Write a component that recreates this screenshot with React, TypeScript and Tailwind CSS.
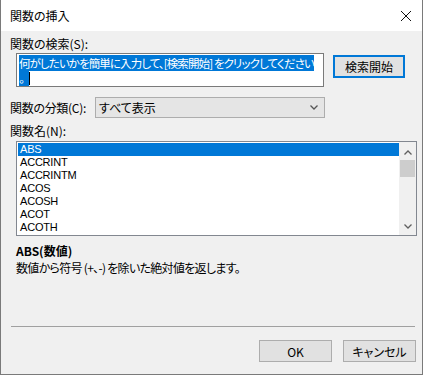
const functions = ["ABS", "ACCRINT", "ACCRINTM", "ACOS", "ACOSH", "ACOT", "ACOTH"];

function CloseIcon() {
  return (
    <svg width="12" height="12" viewBox="0 0 12 12" className="block">
      <path d="M1 1 L11 11 M11 1 L1 11" stroke="#111" strokeWidth="1" fill="none" />
    </svg>
  );
}

function Chevron({ up = false, color = "#606060" }: { up?: boolean; color?: string }) {
  return (
    <svg width="8" height="5" viewBox="0 0 8 5" className="block">
      <path
        d={up ? "M0.5 4.5 L4 1 L7.5 4.5" : "M0.5 0.5 L4 4 L7.5 0.5"}
        stroke={color}
        strokeWidth="1.3"
        fill="none"
      />
    </svg>
  );
}

function Button({ children }: { children: React.ReactNode }) {
  return (
    <div className="flex h-[22px] w-[73px] items-center justify-center border border-[#adadad] bg-[#e1e1e1] text-[12px] leading-[15px] text-black">
      {children}
    </div>
  );
}

export default function App() {
  return (
    <div className="flex h-[375px] w-[423px] flex-col border-x border-b border-[#7a7a7a] bg-[#f0f0f0] font-['Noto_Sans_CJK_JP',sans-serif] text-black [font-feature-settings:'palt']">
      <div className="flex h-[31px] shrink-0 items-center justify-between bg-white pl-[9px] pr-[10px]">
        <span className="text-[12px] leading-[15px]">関数の挿入</span>
        <CloseIcon />
      </div>

      <div className="flex flex-1 flex-col pl-[9px] pr-[6px] pt-[5px]">
        <div className="text-[12px] leading-[15px]">関数の検索(S):</div>

        <div className="mt-[2px] flex items-start">
          <div className="ml-[6px] h-[34px] w-[308px] overflow-hidden border border-[#7a7a7a] bg-white px-[2px] pt-[2px] text-[11.5px] leading-[15px]">
            <div className="whitespace-nowrap tracking-[-0.9px]">
              <span className="bg-[#0078d7] text-white">何がしたいかを簡単に入力して、[検索開始] をクリックしてください</span>
            </div>
            <div className="flex items-center">
              <span className="bg-[#0078d7] pr-[4px] text-white">。</span>
              <span className="h-[13px] w-px bg-black" />
            </div>
          </div>
          <div className="ml-[9px] mt-[2px]">
            <div className="flex h-[23px] w-[72px] items-center justify-center border-2 border-[#0078d7] bg-[#e1e1e1] text-[12px] leading-[15px]">
              検索開始
            </div>
          </div>
        </div>

        <div className="mt-[10px] flex items-center">
          <span className="w-[84px] text-[12px] leading-[15px] tracking-[-0.3px]">関数の分類(C):</span>
          <div className="ml-px flex h-[21px] w-[230px] items-center justify-between border border-[#adadad] bg-[#e5e5e5] pl-[3px] pr-[6px] text-[12px] leading-[15px]">
            <span>すべて表示</span>
            <Chevron color="#555" />
          </div>
        </div>

        <div className="mt-[5px] text-[12px] leading-[15px]">関数名(N):</div>

        <div className="ml-[6px] mt-[3px] flex h-[95px] w-[401px] border border-[#828790] bg-white">
          <div className="flex-1 pl-px pt-px">
            {functions.map((f, i) => (
              <div
                key={f}
                className={
                  "h-[13px] overflow-hidden pl-[2px] font-['Liberation_Sans',sans-serif] text-[11px] leading-[13px] tracking-[-0.2px] " +
                  (i === 0 ? "bg-[#0078d7] text-white" : "text-black")
                }
              >
                {f}
              </div>
            ))}
          </div>
          <div className="flex w-[17px] flex-col items-center bg-[#f0f0f0]">
            <div className="flex h-[17px] w-full items-center justify-center pt-[3px]">
              <Chevron up />
            </div>
            <div className="mt-[1px] h-[17px] w-[15px] bg-[#cdcdcd]" />
            <div className="flex-1" />
            <div className="flex h-[17px] w-full items-center justify-center pb-[1px]">
              <Chevron />
            </div>
          </div>
        </div>

        <div className="ml-[6px] mt-[7px] text-[12px] font-bold leading-[15px]">ABS(数値)</div>
        <div className="ml-[6px] mt-[2px] text-[12px] leading-[15px] tracking-[-0.7px]">数値から符号 (+、-) を除いた絶対値を返します。</div>

        <div className="flex-1" />
        <div className="ml-px mr-[1px] h-px bg-[#a0a0a0]" />
        <div className="mt-[13px] flex justify-end gap-[11px] pb-[12px]">
          <Button>OK</Button>
          <Button>キャンセル</Button>
        </div>
      </div>
    </div>
  );
}
